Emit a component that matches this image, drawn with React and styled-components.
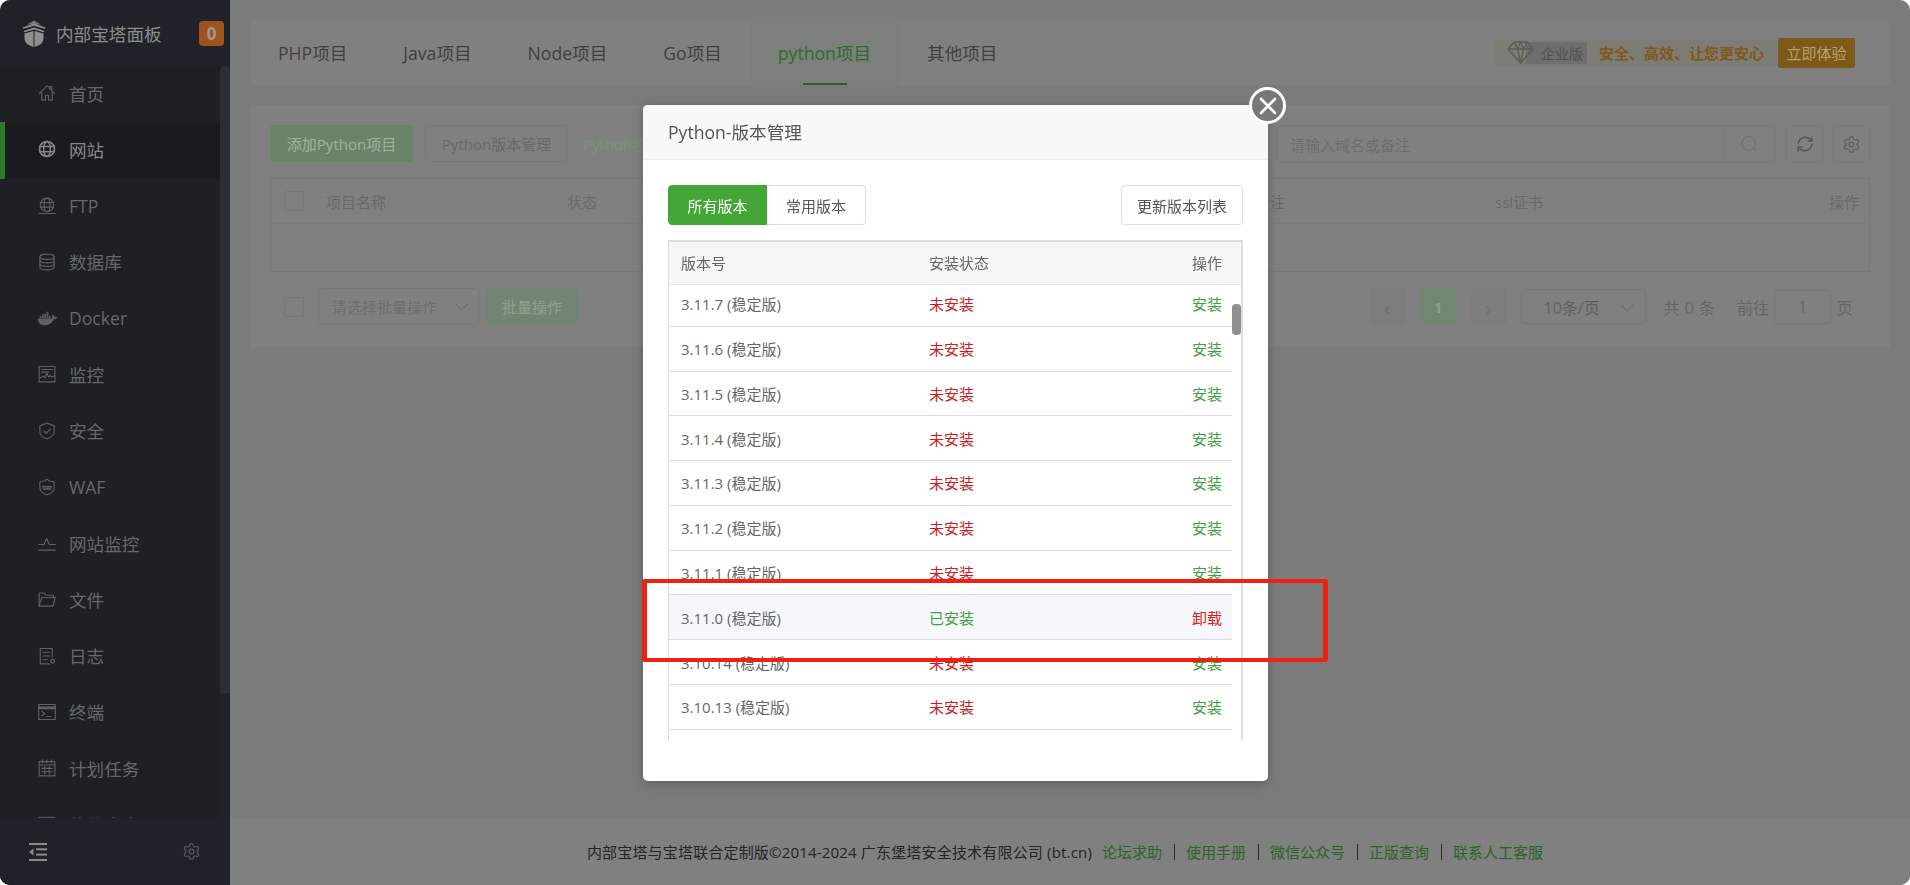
import React from 'react';
import styled, { createGlobalStyle } from 'styled-components';
import { FaDocker } from 'react-icons/fa';
import { RefreshCw, Settings } from 'lucide-react';

const GlobalStyle = createGlobalStyle`
html, body, #root {
    margin: 0;
    padding: 0;
    height: 100%;
    background: #ffffff;
}
* { box-sizing: border-box; }
body {
    font-family: "Open Sans", "Noto Sans CJK SC", sans-serif;
    overflow: hidden;
}
`;

const Icon = ({ children, fill }) => (
    <svg width="18" height="18" viewBox="0 0 24 24" fill={fill || 'none'} stroke="currentColor" strokeWidth="1.5" strokeLinejoin="round" strokeLinecap="round">
        {children}
    </svg>
);

const menus = [
    { name: '首页', icon: <Icon><path d="M2 12.5 12 2.5l10 10" /><path d="M18 8V3.5h-2.500" /><path d="M5 10.500V21.500h5v-6.500h4v6.500h5V10.500" /></Icon> },
    { name: '网站', active: true, icon: <Icon><circle cx="12" cy="12" r="10" strokeWidth="2.200" /><ellipse cx="12" cy="12" rx="4.500" ry="10" strokeWidth="2" /><path d="M2 8.500h20M2 15.500h20" strokeWidth="2" /></Icon> },
    { name: 'FTP', icon: <Icon><circle cx="12" cy="10.500" r="9" /><ellipse cx="12" cy="10.500" rx="4" ry="9" /><path d="M3 7.500h18M3 13.500h18M1 22h22" /></Icon> },
    { name: '数据库', icon: <Icon><ellipse cx="12" cy="5" rx="9.500" ry="3.500" /><path d="M2.500 5v14c0 2 4.300 3.500 9.500 3.500s9.500-1.500 9.500-3.500V5" /><path d="M2.500 9.700c0 2 4.300 3.500 9.500 3.500s9.500-1.500 9.500-3.500M2.500 14.400c0 2 4.300 3.500 9.500 3.500s9.500-1.500 9.500-3.500" /></Icon> },
    { name: 'Docker', icon: <FaDocker size={19} /> },
    { name: '监控', icon: <Icon><rect x="1.500" y="2" width="21" height="20.500" /><path d="M5 6h14M5 9.500h9" /><path d="M3 17l4-2 2 2 3-6 2 5 2-2 2 2 3-1" /></Icon> },
    { name: '安全', icon: <Icon><path d="M12 1.500 21.500 5v8c0 5-4.500 8-9.500 9.500C7 21 2.500 18 2.500 13V5z" /><path d="m8 12 3 3 5.500-5.500" /></Icon> },
    { name: 'WAF', icon: <Icon><path d="M12 1.500 15 4l6.500 1v8c0 5-4.500 8-9.500 9.500C7 21 2.500 18 2.500 13V5L9 4z" /><path d="M6 11.500h12M7 14.500h10" strokeWidth="2" /></Icon> },
    { name: '网站监控', icon: <Icon><path d="M1 14h7l3.500-8 3.500 8h8" /><path d="M1 21.500h22" /></Icon> },
    { name: '文件', icon: <Icon><path d="M1.500 21.500V4h7l2 3h10v3" /><path d="M1.500 21.500 5 10h18l-3 11.500z" /></Icon> },
    { name: '日志', icon: <Icon><path d="M19 13V2H3v20.500h12" /><path d="M6.500 7h9M6.500 12h9M6.500 17h6" /><circle cx="19.500" cy="19" r="2.500" /></Icon> },
    { name: '终端', icon: <Icon><rect x="1" y="2" width="22" height="20" /><path d="M1 6.500h22" strokeWidth="3.500" /><path d="m5 11 4 3-4 3M11 18h6" /></Icon> },
    { name: '计划任务', icon: <Icon><rect x="1.500" y="3.500" width="21" height="19" /><path d="M6 1v4M12 1v4M18 1v4M1.500 8h21M5 12.500h14M5 17h14M9 10v10M15 10v10" /></Icon> },
    { name: '软件商店', icon: <Icon><rect x="1.500" y="3" width="21" height="19" /><path d="M1.500 9h21" /></Icon> },
];

const tabs = ['PHP项目', 'Java项目', 'Node项目', 'Go项目', 'python项目', '其他项目'];

const versions = [
    { v: '3.11.7' }, { v: '3.11.6' }, { v: '3.11.5' }, { v: '3.11.4' }, { v: '3.11.3' }, { v: '3.11.2' }, { v: '3.11.1' },
    { v: '3.11.0', installed: true }, { v: '3.10.14' }, { v: '3.10.13' }, { v: '3.10.12' },
];

const App = () => {
    return (
        <Page>
            <GlobalStyle />
            <Sidebar>
                <Logo>
                    <svg width="26" height="27" viewBox="0 0 26 27" fill="#8f8f8f">
                        <path d="M13 0.500 20 4.500H6z" opacity=".75" />
                        <path d="M1.500 7.500 13 3.500l11.500 4-1 1.200L13 5.800 2.500 8.700z" />
                        <path d="M2.500 11 13 7.500 23.500 11l-1 1.200L13 9.500 3.500 12.200z" />
                        <path d="M3.500 13.500 12.500 11v16C7 25.500 3.500 22.500 3.500 18zM22.500 13.500 13.500 11v16c5.500-1.500 9-4.500 9-9z" />
                    </svg>
                    <LogoText>内部宝塔面板</LogoText>
                    <Badge>0</Badge>
                </Logo>
                <MenuArea>
                    <Menu>
                        {menus.map(m => (
                            <MenuItem key={m.name} $active={m.active}>
                                <MenuIcon $active={m.active}>{m.icon}</MenuIcon>
                                {m.name}
                            </MenuItem>
                        ))}
                    </Menu>
                    <SideTrack><SideThumb /></SideTrack>
                </MenuArea>
                <SideFooter>
                    <svg width="18" height="18" viewBox="0 0 18 18" fill="#8a8a8a">
                        <rect x="0" y="0" width="18" height="2" />
                        <rect x="7" y="5.300" width="11" height="2" />
                        <rect x="7" y="10.600" width="11" height="2" />
                        <rect x="0" y="16" width="18" height="2" />
                        <path d="M4.500 5.500v7L0 9z" />
                    </svg>
                    <GearSlot><Settings size={19} strokeWidth={1.500} /></GearSlot>
                </SideFooter>
            </Sidebar>

            <Main>
                <Content>
                    <TabCard>
                        {tabs.map(t => (
                            <Tab key={t} $active={t === 'python项目'}>{t}</Tab>
                        ))}
                        <Promo>
                            <PromoBar>
                                <Diamond>
                                    <svg width="27" height="23" viewBox="0 0 27 23" fill="none" stroke="#5c5c5c" strokeWidth="1.400" strokeLinejoin="round">
                                        <path d="M7 1h13l6 7-12.500 14L1 8z" />
                                        <path d="M1 8h25M7 1l3.500 7 3 14 3-14L20 1M10.500 8l3-7 3 7" />
                                    </svg>
                                </Diamond>
                                <PromoTag>企业版</PromoTag>
                                <PromoText>安全、高效、让您更安心</PromoText>
                            </PromoBar>
                            <PromoButton>立即体验</PromoButton>
                        </Promo>
                    </TabCard>

                    <ProjectCard>
                        <Toolbar>
                            <AddButton>添加Python项目</AddButton>
                            <PlainButton>Python版本管理</PlainButton>
                            <ToolLink>Python项目教程</ToolLink>
                            <ToolRight>
                                <Search>
                                    <SearchInput>请输入域名或备注</SearchInput>
                                    <SearchIcon>
                                        <svg width="18" height="18" viewBox="0 0 24 24" fill="none" stroke="#707070" strokeWidth="1.600">
                                            <circle cx="11.500" cy="11" r="9" />
                                            <path d="m18 18 3 3" />
                                        </svg>
                                    </SearchIcon>
                                </Search>
                                <IconButton><RefreshCw size={18} strokeWidth={2} color="#555555" /></IconButton>
                                <IconButton $last><Settings size={19} strokeWidth={1.500} color="#5c5c5c" /></IconButton>
                            </ToolRight>
                        </Toolbar>

                        <ProjectTable>
                            <ProjectHead>
                                <HeadCheck><CheckBox /></HeadCheck>
                                <span>项目名称</span>
                                <span>状态</span>
                                <span>备注</span>
                                <span>ssl证书</span>
                                <HeadRight>操作</HeadRight>
                            </ProjectHead>
                            <ProjectEmpty />
                        </ProjectTable>

                        <BottomBar>
                            <CheckBox />
                            <BatchSelect>
                                请选择批量操作
                                <Chevron />
                            </BatchSelect>
                            <BatchButton>批量操作</BatchButton>
                            <Pager>
                                <PageArrow>‹</PageArrow>
                                <PageCurrent>1</PageCurrent>
                                <PageArrow>›</PageArrow>
                                <PageSize>
                                    10条/页
                                    <Chevron />
                                </PageSize>
                                <PageText $left="18px">共 0 条</PageText>
                                <PageText $left="22px">前往</PageText>
                                <PageInput>1</PageInput>
                                <PageText $left="6px">页</PageText>
                            </Pager>
                        </BottomBar>
                    </ProjectCard>
                </Content>
                <Footer>
                    <FooterCopy>内部宝塔与宝塔联合定制版©2014-2024 广东堡塔安全技术有限公司 (bt.cn)</FooterCopy>
                    <FooterLink>论坛求助</FooterLink>
                    <FooterSep />
                    <FooterLink>使用手册</FooterLink>
                    <FooterSep />
                    <FooterLink>微信公众号</FooterLink>
                    <FooterSep />
                    <FooterLink>正版查询</FooterLink>
                    <FooterSep />
                    <FooterLink>联系人工客服</FooterLink>
                </Footer>
            </Main>

            <Modal>
                <CloseButton>
                    <svg width="20" height="20" viewBox="0 0 20 20" stroke="#ffffff" strokeWidth="2.600" strokeLinecap="round">
                        <path d="M3 3l14 14M17 3 3 17" />
                    </svg>
                </CloseButton>
                <ModalTitle>Python-版本管理</ModalTitle>
                <ModalBody>
                    <ModalBar>
                        <SwitchButton $active>所有版本</SwitchButton>
                        <SwitchButton>常用版本</SwitchButton>
                        <UpdateButton>更新版本列表</UpdateButton>
                    </ModalBar>
                    <VersionTable>
                        <VersionHead>
                            <span>版本号</span>
                            <span>安装状态</span>
                            <ActionCell>操作</ActionCell>
                        </VersionHead>
                        <VersionBody>
                            <VersionList>
                                {versions.map(r => (
                                    <VersionRow key={r.v} $hl={r.installed}>
                                        <span>{r.v} (稳定版)</span>
                                        <Status $on={r.installed}>{r.installed ? '已安装' : '未安装'}</Status>
                                        <Action $on={r.installed}>{r.installed ? '卸载' : '安装'}</Action>
                                    </VersionRow>
                                ))}
                            </VersionList>
                            <VersionThumb />
                        </VersionBody>
                    </VersionTable>
                </ModalBody>
            </Modal>
            <RedBox />
        </Page>
    );
};

const Page = styled.div`
display: flex;
width: 100vw;
height: 100vh;
border-radius: 10px;
overflow: hidden;
background: #7b7b7b;
font-size: 15px;
`;

/* sidebar */
const Sidebar = styled.div`
width: 230px;
flex: none;
display: flex;
flex-direction: column;
background: #1f2329;
`;

const Logo = styled.div`
height: 66px;
flex: none;
display: flex;
align-items: center;
padding: 0 6px 0 21px;
`;

const LogoText = styled.div`
margin-left: 9px;
font-size: 17.600px;
color: #8b8c8e;
flex: 1;
`;

const Badge = styled.div`
width: 25px;
height: 25px;
border-radius: 4px;
background: #a0521d;
color: #9a9a96;
font-size: 17px;
font-weight: 700;
display: flex;
align-items: center;
justify-content: center;
`;

const MenuArea = styled.div`
flex: 1;
min-height: 0;
display: flex;
overflow: hidden;
background: #1d2025;
`;

const Menu = styled.div`
width: 220px;
flex: none;
`;

const MenuItem = styled.div`
height: 56.250px;
display: flex;
align-items: center;
padding-left: ${p => (p.$active ? '33px' : '38px')};
padding-bottom: 2px;
font-size: 17.600px;
color: ${p => (p.$active ? '#85878a' : '#66686b')};
background: ${p => (p.$active ? '#191b1f' : 'transparent')};
border-left: ${p => (p.$active ? '5px solid #2f7a2a' : '0')};
`;

const MenuIcon = styled.span`
width: 31px;
display: flex;
align-items: center;
color: ${p => (p.$active ? '#85878a' : '#5e6064')};
`;

const SideTrack = styled.div`
flex: 1;
background: #1f2328;
`;

const SideThumb = styled.div`
height: 627px;
background: #2b2f34;
border-radius: 5px 5px 0 0;
`;

const SideFooter = styled.div`
height: 67px;
flex: none;
display: flex;
align-items: center;
padding: 0 29px;
background: #1f2329;
`;

const GearSlot = styled.div`
margin-left: auto;
display: flex;
color: #56585c;
`;

/* main */
const Main = styled.div`
flex: 1;
min-width: 0;
display: flex;
flex-direction: column;
`;

const Content = styled.div`
flex: 1;
padding: 20px;
`;

const TabCard = styled.div`
height: 65px;
display: flex;
background: #808080;
border-radius: 5px;
`;

const Tab = styled.div`
position: relative;
display: flex;
align-items: center;
padding: 0 28px;
font-size: 17.600px;
color: ${p => (p.$active ? '#2f6a30' : '#404040')};
background: ${p => (p.$active ? '#7b807b' : 'transparent')};
${p => p.$active && `
&::after {
    content: "";
    position: absolute;
    left: 53px;
    right: 52px;
    bottom: 0;
    height: 2px;
    background: #2e5f2c;
}
`}
`;

const Promo = styled.div`
margin: 0 35px 0 auto;
display: flex;
align-items: center;
`;

const PromoBar = styled.div`
width: 283px;
height: 26px;
display: flex;
align-items: center;
padding-left: 12px;
background: #7d7d76;
border-radius: 3px 0 0 3px;
`;

const Diamond = styled.div`
display: flex;
position: relative;
z-index: 1;
`;

const PromoTag = styled.div`
width: 61px;
height: 22px;
margin-left: -8px;
padding-left: 15px;
display: flex;
align-items: center;
font-size: 14px;
color: #525252;
background: #6e6e6e;
border-radius: 2px;
`;

const PromoText = styled.div`
margin-left: 12px;
font-size: 15px;
font-weight: 700;
color: #80591a;
white-space: nowrap;
`;

const PromoButton = styled.div`
width: 77px;
height: 30px;
display: flex;
align-items: center;
justify-content: center;
font-size: 15px;
color: #b8a070;
background: #7d5a1a;
border-radius: 2px;
`;

const ProjectCard = styled.div`
margin-top: 20px;
height: 242px;
padding: 20px;
background: #808080;
`;

const Toolbar = styled.div`
display: flex;
align-items: flex-start;
height: 38px;
`;

const AddButton = styled.div`
width: 143px;
height: 37px;
display: flex;
align-items: center;
justify-content: center;
border-radius: 4px;
background: #6a8469;
color: #a0b2a0;
`;

const PlainButton = styled.div`
width: 143px;
height: 37px;
margin-left: 12px;
display: flex;
align-items: center;
justify-content: center;
border-radius: 4px;
border: 1px solid #797979;
color: #686868;
`;

const ToolLink = styled.div`
margin-left: 15px;
height: 37px;
display: flex;
align-items: center;
color: #789478;
`;

const ToolRight = styled.div`
margin-left: auto;
display: flex;
`;

const Search = styled.div`
width: 499px;
height: 38px;
display: flex;
border: 1px solid #797979;
border-radius: 4px;
`;

const SearchInput = styled.div`
flex: 1;
display: flex;
align-items: center;
padding-left: 13px;
color: #6e6e6e;
`;

const SearchIcon = styled.div`
width: 51px;
display: flex;
align-items: center;
justify-content: center;
border-left: 1px solid #797979;
`;

const IconButton = styled.div`
width: 37px;
height: 38px;
margin-left: ${p => (p.$last ? '10px' : '11px')};
display: flex;
align-items: center;
justify-content: center;
border: 1px solid #797979;
border-radius: 4px;
`;

const ProjectTable = styled.div`
margin-top: 15px;
border: 1px solid #797979;
`;

const ProjectHead = styled.div`
height: 45px;
display: grid;
grid-template-columns: 55px 241px 688px 240px 1fr 60px;
align-items: center;
padding-right: 10px;
color: #696969;
border-bottom: 1px solid #7b7b7b;
`;

const HeadCheck = styled.div`
padding-left: 13px;
display: flex;
`;

const HeadRight = styled.span`
text-align: right;
`;

const ProjectEmpty = styled.div`
height: 47px;
`;

const CheckBox = styled.div`
width: 20px;
height: 20px;
flex: none;
border: 1px solid #787878;
border-radius: 2px;
`;

const BottomBar = styled.div`
margin-top: 16px;
padding-left: 14px;
display: flex;
align-items: center;
height: 37px;
`;

const BatchSelect = styled.div`
position: relative;
width: 162px;
height: 37px;
margin-left: 14px;
padding-left: 13px;
display: flex;
align-items: center;
color: #6e6e6e;
border: 1px solid #797979;
border-radius: 4px;
`;

const Chevron = styled.span`
position: absolute;
right: 13px;
top: 11px;
width: 9px;
height: 9px;
border-right: 1px solid #6c6c6c;
border-bottom: 1px solid #6c6c6c;
transform: rotate(45deg);
`;

const BatchButton = styled.div`
width: 92px;
height: 37px;
margin-left: 6px;
display: flex;
align-items: center;
justify-content: center;
border-radius: 4px;
background: #748474;
color: #8fa08f;
`;

const Pager = styled.div`
margin-left: auto;
margin-right: 17px;
display: flex;
align-items: center;
color: #666666;
`;

const PageArrow = styled.div`
width: 36px;
height: 35px;
margin-right: 14px;
display: flex;
align-items: center;
justify-content: center;
font-size: 22px;
color: #707070;
background: #7d7d7d;
border-radius: 2px;
`;

const PageCurrent = styled(PageArrow)`
width: 37px;
font-size: 15px;
font-weight: 700;
color: #8ba08a;
background: #72876f;
`;

const PageSize = styled.div`
position: relative;
width: 125px;
height: 35px;
padding-left: 22px;
display: flex;
align-items: center;
font-size: 16px;
color: #5f5f5f;
border: 1px solid #797979;
border-radius: 3px;
`;

const PageText = styled.span`
margin-left: ${p => p.$left};
font-size: 16px;
word-spacing: 1px;
`;

const PageInput = styled.div`
width: 57px;
height: 34px;
margin-left: 5px;
display: flex;
align-items: center;
justify-content: center;
font-size: 16px;
border: 1px solid #797979;
border-radius: 3px;
`;

const Footer = styled.div`
height: 67px;
flex: none;
display: flex;
align-items: center;
justify-content: center;
padding-right: 10px;
background: #808080;
`;

const FooterCopy = styled.span`
color: #242424;
margin-right: 10px;
letter-spacing: 0.180px;
`;

const FooterLink = styled.span`
color: #2a6427;
`;

const FooterSep = styled.span`
width: 1px;
height: 16px;
margin: 0 11.500px;
background: #2a2a2a;
`;

/* dialog */
const Modal = styled.div`
position: fixed;
left: 643px;
top: 105px;
width: 625px;
height: 676px;
display: flex;
flex-direction: column;
background: #ffffff;
border-radius: 5px;
box-shadow: 0 2px 12px rgba(0, 0, 0, 0.25);
`;

const CloseButton = styled.div`
position: absolute;
right: -18px;
top: -18px;
width: 37px;
height: 37px;
display: flex;
align-items: center;
justify-content: center;
border: 3px solid #ffffff;
border-radius: 50%;
background: #787878;
`;

const ModalTitle = styled.div`
height: 55px;
flex: none;
display: flex;
align-items: center;
padding-left: 25px;
padding-bottom: 2px;
font-size: 17.600px;
color: #555555;
background: #f8f8f8;
border-bottom: 1px solid #eeeeee;
border-radius: 5px 5px 0 0;
`;

const ModalBody = styled.div`
flex: 1;
padding: 25px 25px 0;
`;

const ModalBar = styled.div`
display: flex;
height: 40px;
`;

const SwitchButton = styled.div`
width: 99px;
display: flex;
align-items: center;
justify-content: center;
color: ${p => (p.$active ? '#ffffff' : '#555555')};
background: ${p => (p.$active ? '#43a636' : '#ffffff')};
border: 1px solid ${p => (p.$active ? '#43a636' : '#dddddd')};
border-left-width: ${p => (p.$active ? '1px' : '0')};
border-radius: ${p => (p.$active ? '4px 0 0 4px' : '0 4px 4px 0')};
`;

const UpdateButton = styled.div`
width: 122px;
margin-left: auto;
display: flex;
align-items: center;
justify-content: center;
color: #555555;
border: 1px solid #dddddd;
border-radius: 4px;
`;

const VersionTable = styled.div`
margin-top: 15px;
height: 500px;
display: flex;
flex-direction: column;
border-top: 2px solid #dddddd;
border-left: 1px solid #dddddd;
border-right: 2px solid #dddddd;
`;

const versionCols = `
display: grid;
grid-template-columns: 248px 1fr 80px;
align-items: center;
padding: 0 11px 0 12px;
`;

const VersionHead = styled.div`
${versionCols}
height: 43px;
flex: none;
padding-bottom: 2px;
color: #666666;
background: #f6f6f6;
border-bottom: 1px solid #e4e4e4;
`;

const ActionCell = styled.span`
text-align: right;
padding-right: 8px;
`;

const VersionBody = styled.div`
position: relative;
flex: 1;
min-height: 0;
overflow: hidden;
padding-right: 9px;
`;

const VersionList = styled.div`
margin-top: -3px;
`;

const VersionRow = styled.div`
${versionCols}
padding-right: 10px;
height: 44.770px;
color: #666666;
background: ${p => (p.$hl ? '#f5f7fa' : '#ffffff')};
border-bottom: 1px solid #dddddd;
`;

const Status = styled.span`
color: ${p => (p.$on ? '#3f9f3f' : '#c81e1e')};
`;

const Action = styled.span`
text-align: right;
color: ${p => (p.$on ? '#d22222' : '#3f9f3f')};
`;

const VersionThumb = styled.div`
position: absolute;
right: 0;
top: 19px;
width: 9px;
height: 31px;
border-radius: 4px;
background: #8f8f8f;
`;

const RedBox = styled.div`
position: fixed;
left: 642px;
top: 579px;
width: 686px;
height: 83px;
border: 4px solid #ee2211;
border-width: 4px 5px;
border-radius: 3px;
`;

export default App;
